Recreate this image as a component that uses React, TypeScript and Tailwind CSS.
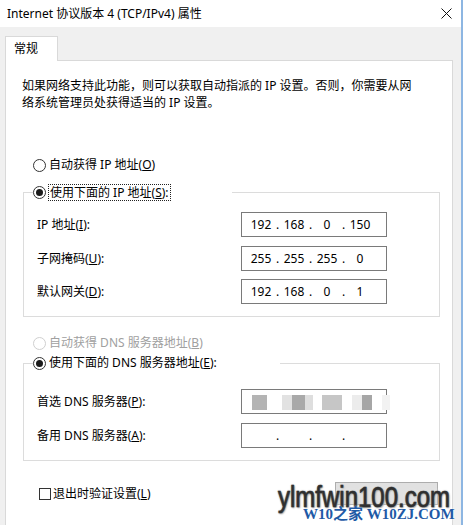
import { Fragment } from "react";

const ui = "font-['Noto_Sans','Noto_Sans_CJK_SC',sans-serif]";

function Radio({ checked, disabled }: { checked?: boolean; disabled?: boolean }) {
  return (
    <span
      className={`w-[13px] h-[13px] rounded-full border flex items-center justify-center shrink-0 bg-white ${
        disabled ? "border-[#cfcfcf]" : "border-[#333333]"
      }`}
    >
      {checked && <span className="w-[7px] h-[7px] rounded-full bg-[#1a1a1a]" />}
    </span>
  );
}

function IpBox({ parts }: { parts: string[] }) {
  return (
    <div className="w-[146px] h-[25px] border border-[#7a7a7a] bg-white flex items-center pl-[6px] text-[12px]">
      {parts.map((p, i) => (
        <Fragment key={i}>
          <span className="w-[26px] text-center">{p}</span>
          {i < 3 && <span className="w-[7px] text-center">.</span>}
        </Fragment>
      ))}
    </div>
  );
}

// blurred (mosaic) address in the preferred DNS box
function MosaicBox() {
  const cells = [
    { w: 10, c: "bg-white" },
    { w: 15, c: "bg-[#b4b4b4]" },
    { w: 15, c: "bg-white" },
    { w: 10, c: "bg-[#e2e2e2]" },
    { w: 13, c: "bg-[#a9a9a9]" },
    { w: 8, c: "bg-[#dedede]" },
    { w: 9, c: "bg-white" },
    { w: 20, c: "bg-[#c6c6c6]" },
    { w: 10, c: "bg-white" },
    { w: 10, c: "bg-[#ececec]" },
    { w: 10, c: "bg-[#a6a6a6]" },
    { w: 10, c: "bg-white" },
    { w: 8, c: "bg-[#f2f2f2]" },
  ];
  return (
    <div className="w-[146px] h-[25px] border border-[#7a7a7a] bg-white flex items-center">
      <div className="flex h-[15px] mt-[2px]">
        {cells.map((cell, i) => (
          <span key={i} className={`h-full ${cell.c}`} style={{ width: cell.w }} />
        ))}
      </div>
    </div>
  );
}

function Row({ label, children, className = "" }: { label: React.ReactNode; children: React.ReactNode; className?: string }) {
  return (
    <div className={`flex items-center pl-[13px] ${className}`}>
      <span className="w-[204px]">{label}</span>
      {children}
    </div>
  );
}

export default function App() {
  return (
    <div className={`w-[463px] h-[525px] overflow-hidden relative flex bg-[#f0f0f0] text-[12px] text-black ${ui}`}>
      <div className="flex-1 flex flex-col">
        {/* Title bar */}
        <div className="h-[27px] shrink-0 bg-white flex items-center justify-between pl-[7px] pr-[9px]">
          <span>Internet 协议版本 4 (TCP/IPv4) 属性</span>
          <svg width="11" height="11" viewBox="0 0 11 11">
            <path d="M0.5 0.5 L10.5 10.5 M10.5 0.5 L0.5 10.5" stroke="#111" strokeWidth="1" />
          </svg>
        </div>

        <div className="shrink-0 pl-[5px] pt-[9px]">
          {/* Tab */}
          <div className="w-[53px] h-[25px] bg-white border-t border-l border-r border-[#d9d9d9] relative z-10 -mb-[1px] pl-[8px] flex items-center">
            常规
          </div>

          {/* Panel */}
          <div className="w-[448px] h-[480px] bg-white border border-[#d9d9d9]">
            <p className="pl-[16px] pt-[16px] leading-[17px] whitespace-nowrap">
              如果网络支持此功能，则可以获取自动指派的 IP 设置。否则，你需要从网
              <br />
              络系统管理员处获得适当的 IP 设置。
            </p>

            <div className="mt-[44px] h-[20px] pl-[27px] flex items-center gap-[3px]">
              <Radio />
              <span>
                自动获得 IP 地址(<u>O</u>)
              </span>
            </div>

            <fieldset className="ml-[17px] mt-[7px] w-[417px] border border-[#dcdcdc] pb-[12px]">
              <legend className="ml-[9px] w-[199px] h-[20px]">
                <span className="h-[20px] flex items-center gap-[2px]">
                  <Radio checked />
                  <span className="border border-dotted border-[#222] px-[1px] leading-[15px]">
                    使用下面的 IP 地址(<u>S</u>):
                  </span>
                </span>
              </legend>
              <Row label={<>IP 地址(<u>I</u>):</>} className="mt-[10px]">
                <IpBox parts={["192", "168", "0", "150"]} />
              </Row>
              <Row label={<>子网掩码(<u>U</u>):</>} className="mt-[9px]">
                <IpBox parts={["255", "255", "255", "0"]} />
              </Row>
              <Row label={<>默认网关(<u>D</u>):</>} className="mt-[8px]">
                <IpBox parts={["192", "168", "0", "1"]} />
              </Row>
            </fieldset>

            <div className="mt-[16px] h-[20px] pl-[27px] flex items-center gap-[3px] text-[#a0a0a0]">
              <Radio disabled />
              <span>
                自动获得 DNS 服务器地址(<u>B</u>)
              </span>
            </div>

            <fieldset className="ml-[17px] w-[417px] border border-[#dcdcdc] pb-[12px]">
              <legend className="ml-[9px] w-[247px] h-[20px]">
                <span className="h-[20px] flex items-center gap-[3px]">
                  <Radio checked />
                  <span>
                    使用下面的 DNS 服务器地址(<u>E</u>):
                  </span>
                </span>
              </legend>
              <Row label={<>首选 DNS 服务器(<u>P</u>):</>} className="mt-[16px]">
                <MosaicBox />
              </Row>
              <Row label={<>备用 DNS 服务器(<u>A</u>):</>} className="mt-[9px]">
                <IpBox parts={["", "", "", ""]} />
              </Row>
            </fieldset>

            <div className="mt-[21px] h-[23px] flex items-center justify-between pl-[33px] pr-[14px]">
              <div className="flex items-center gap-[2px]">
                <span className="w-[12px] h-[12px] border border-[#333333] bg-white" />
                <span>
                  退出时验证设置(<u>L</u>)
                </span>
              </div>
              <button className="w-[103px] h-[23px] bg-[#e1e1e1] border border-[#adadad] text-transparent">高级(V)...</button>
            </div>
          </div>
        </div>
      </div>
      <div className="w-[2px] h-full bg-[#8db6e2]" />

      {/* Watermark */}
      <div className="absolute left-[278px] top-[482px] origin-left scale-x-[0.8] font-['Liberation_Sans',sans-serif] text-[30px] leading-none text-[#2f2f2f] whitespace-nowrap [-webkit-text-stroke:0.6px_#2f2f2f] [text-shadow:0_0_1px_#8a8a8a,0_0_2px_#8a8a8a,1px_1px_2px_#9a9a9a,0_0_4px_#ffffff]">
        ylmfwin100.com
      </div>
      <div className="absolute left-[303px] top-[507px] font-['Liberation_Serif','Noto_Sans_CJK_SC',serif] font-bold text-[15px] leading-none text-[#1f5aa6] whitespace-nowrap [text-shadow:0_0_2px_#ffffff]">
        W10之家 W10ZJ.COM
      </div>
    </div>
  );
}
